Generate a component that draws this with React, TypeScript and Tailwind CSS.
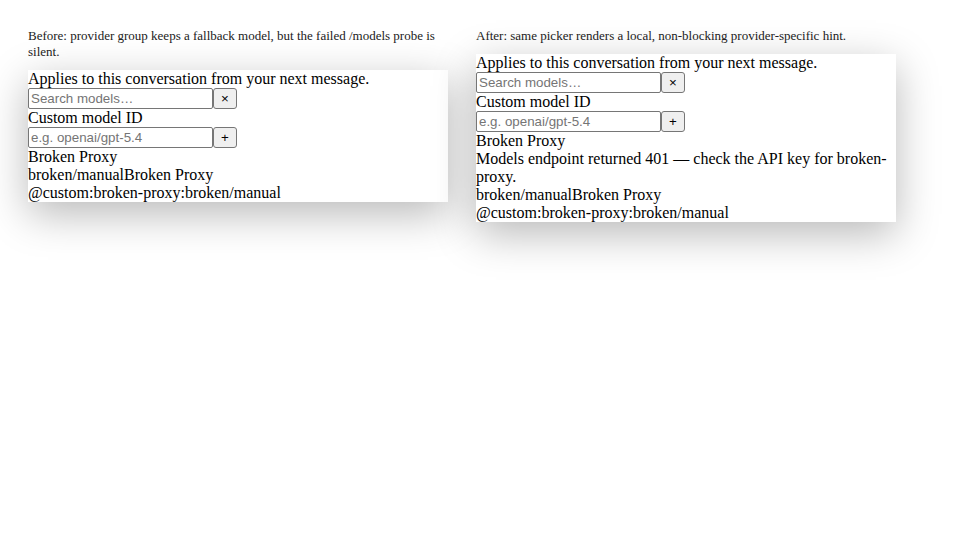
import { useState } from 'react'

type Side = {
    caption: string
    hint?: string
}

const sides: Side[] = [
    { caption: 'Before: provider group keeps a fallback model, but the failed /models probe is silent.' },
    {
        caption: 'After: same picker renders a local, non-blocking provider-specific hint.',
        hint: 'Models endpoint returned 401 \u2014 check the API key for broken-proxy.',
    },
]

const inputCls = 'w-[185px] h-[21px] border border-[#767676] rounded-[2px] px-[2px] text-[13.33px] font-["Liberation_Sans",Arial,sans-serif] bg-white placeholder:text-[#757575] outline-none'
const btnCls = 'h-[21px] w-[24px] border border-[#767676] rounded-[3px] bg-[#efefef] text-[13.33px] font-["Liberation_Sans",Arial,sans-serif] leading-none flex items-center justify-center'

function Picker({ hint }: { hint?: string }) {
    const [query, setQuery] = useState('')
    const [custom, setCustom] = useState('')

    return (
        <div className="bg-white shadow-[0_12px_40px_rgba(0,0,0,0.28)] text-[16px] leading-[18px]">
            <div>Applies to this conversation from your next message.</div>
            <div className="flex">
                <input className={inputCls} placeholder="Search models…" value={query} onChange={e => setQuery(e.target.value)} />
                <button className={btnCls} onClick={() => setQuery('')}>×</button>
            </div>
            <div>Custom model ID</div>
            <div className="flex">
                <input className={inputCls} placeholder="e.g. openai/gpt-5.4" value={custom} onChange={e => setCustom(e.target.value)} />
                <button className={btnCls}>+</button>
            </div>
            <div>Broken Proxy</div>
            {hint && <div>{hint}</div>}
            <div>
                <span>broken/manual</span>
                <span>Broken Proxy</span>
            </div>
            <div>@custom:broken-proxy:broken/manual</div>
        </div>
    )
}

export default function App() {
    return (
        <div className="min-h-[560px] bg-white p-[28px] font-['Liberation_Serif','Times_New_Roman',serif] text-black">
            <div className="grid grid-cols-[420px_420px] gap-[28px] items-start">
                {sides.map(side => (
                    <div key={side.caption} className="flex flex-col gap-[10.8px]">
                        <p className="text-[13px] leading-[15.6px] text-[#222]">{side.caption}</p>
                        <Picker hint={side.hint} />
                    </div>
                ))}
            </div>
        </div>
    )
}
